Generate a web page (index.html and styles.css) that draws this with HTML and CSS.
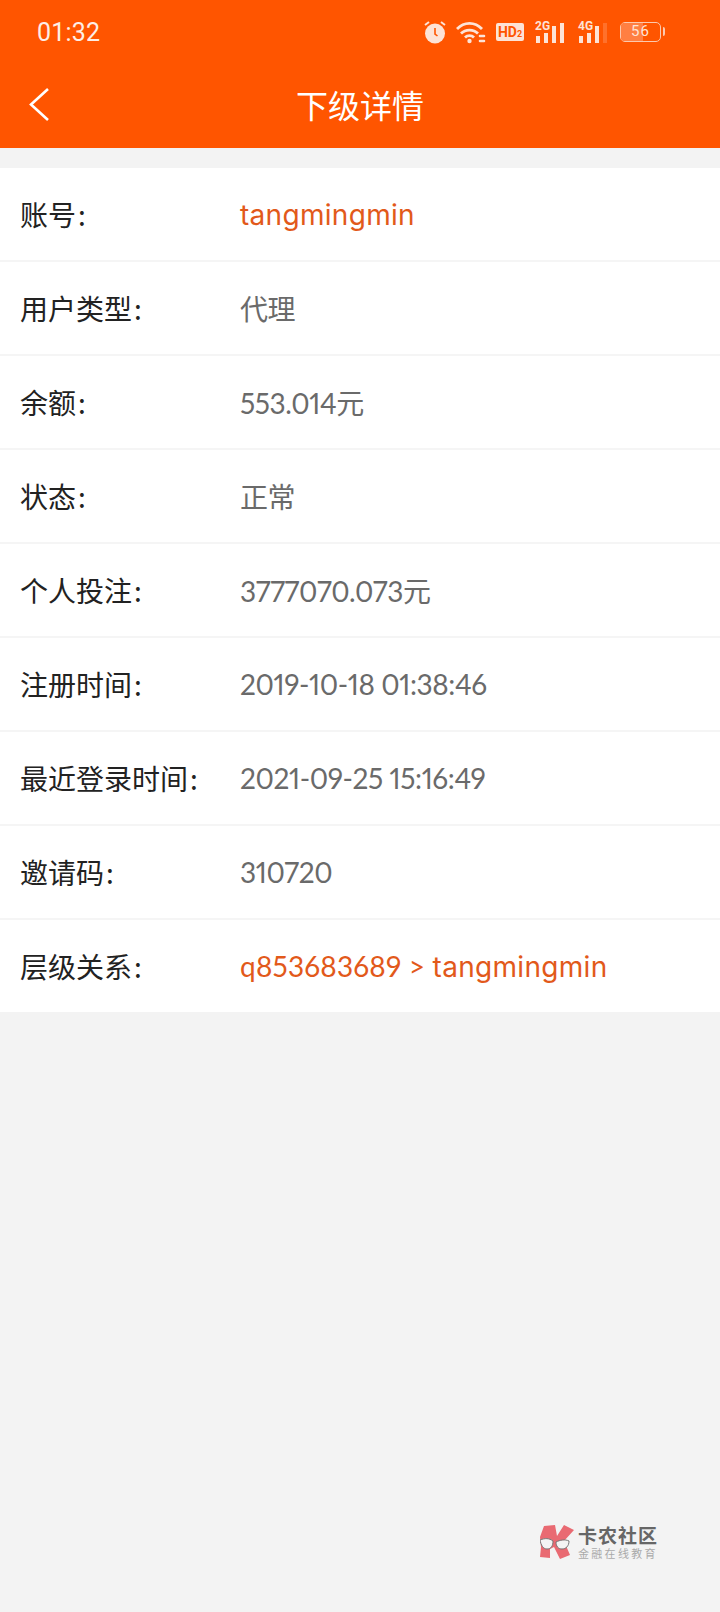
FILE: index.html
```html
<!DOCTYPE html>
<html lang="zh-CN">
<head>
  <meta charset="UTF-8">
  <meta name="viewport" content="width=device-width, initial-scale=1.0">
  <title>下级详情</title>
  <link rel="stylesheet" href="styles.css">
</head>
<body>
  <header class="top">
    <div class="status">
      <span class="time">01:32</span>
      <div class="status-icons">
        <!-- alarm -->
        <svg class="ic-alarm" width="24" height="24" viewBox="0 0 24 24">
          <circle cx="12" cy="13.5" r="10" fill="#fde3d6"/>
          <path d="M12 8v6l2.5 2" fill="none" stroke="#ff5500" stroke-width="1.6"/>
          <path d="M2 5l4-3M22 5l-4-3" fill="none" stroke="#fde3d6" stroke-width="2"/>
        </svg>
        <!-- wifi -->
        <svg class="ic-wifi" width="30" height="24" viewBox="0 0 30 24">
          <path d="M1 9C8 1.500 19 1.500 26 9M5 13.500c4.500-4.500 12.500-4.500 17 0M9 17.500c2.500-2.500 6.500-2.500 9 0" fill="none" stroke="#fde3d6" stroke-width="2.800"/>
          <circle cx="13.500" cy="21" r="2.200" fill="#fde3d6"/>
          <path d="M24 16l4 0M24 21l4 0" stroke="#fde3d6" stroke-width="2.600" stroke-linecap="round"/>
        </svg>
        <span class="hd">HD<small>2</small></span>
        <div class="signal">
          <span class="net">2G</span>
          <i class="b1"></i><i class="b2"></i><i class="b3"></i><i class="b4"></i>
        </div>
        <div class="signal">
          <span class="net">4G</span>
          <i class="b1"></i><i class="b2"></i><i class="b3"></i><i class="b4 dim"></i>
        </div>
        <div class="battery">
          <div class="level"></div>
          <span>56</span>
        </div>
      </div>
    </div>
    <div class="bar">
      <svg class="back" width="24" height="36" viewBox="0 0 24 36">
        <path d="M21 2L4 17.5 21 33" fill="none" stroke="#fff" stroke-width="2.6"/>
      </svg>
      <h1>下级详情</h1>
    </div>
  </header>

  <main class="list">
    <div class="row"><span class="label">账号<b>:</b></span><span class="value hot"><span class="name">tangmingmin</span></span></div>
    <div class="row"><span class="label">用户类型<b>:</b></span><span class="value">代理</span></div>
    <div class="row"><span class="label">余额<b>:</b></span><span class="value">553.014元</span></div>
    <div class="row"><span class="label">状态<b>:</b></span><span class="value">正常</span></div>
    <div class="row"><span class="label">个人投注<b>:</b></span><span class="value">3777070.073元</span></div>
    <div class="row"><span class="label">注册时间<b>:</b></span><span class="value">2019-10-18 01:38:46</span></div>
    <div class="row"><span class="label">最近登录时间<b>:</b></span><span class="value">2021-09-25 15:16:49</span></div>
    <div class="row"><span class="label">邀请码<b>:</b></span><span class="value">310720</span></div>
    <div class="row"><span class="label">层级关系<b>:</b></span><span class="value hot">q853683689 &gt; <span class="name">tangmingmin</span></span></div>
  </main>

  <div class="mark">
    <svg width="36" height="36" viewBox="0 0 36 36">
      <path d="M4 2l11-1 2 11 7-11 10 5-10 11 6 14-10 4-6-12-4 2 0 9-10-1 1-10-1-10z" fill="#e96a72"/>
      <path d="M0 16c5-2 9-2 13 1 0 5-2 8-6 8S1 21 0 16zM16 18c4-2 9-3 13-1 0 5-3 8-7 8s-6-3-6-7z" fill="#f4f4f4" stroke="#777" stroke-width="1"/>
    </svg>
    <div class="mark-text">
      <strong>卡农社区</strong>
      <span>金融在线教育</span>
    </div>
  </div>
</body>
</html>
```

FILE: styles.css
```css
body {
  font-family: "Lato", "Noto Sans CJK SC", sans-serif;
  margin: 0;
  padding: 0;
  width: 720px;
  height: 1612px;
  background-color: #f3f3f3;
  position: relative;
  overflow: hidden;
}
.top {
  background-color: #ff5500;
  color: white;
  height: 148px;
}
.status {
  display: flex;
  justify-content: space-between;
  align-items: center;
  height: 64px;
  padding: 0 59px 0 37px;
}
.time {
  font-family: "Roboto", sans-serif;
  font-size: 25px;
  color: #fdeee6;
  letter-spacing: 0.2px;
}
.status-icons {
  display: flex;
  align-items: center;
  gap: 10px;
}
.ic-alarm {
  margin-right: -1px;
}
.hd {
  background-color: #fde3d6;
  color: #ff5500;
  font-family: "Roboto", sans-serif;
  font-size: 14px;
  font-weight: bold;
  line-height: 18px;
  width: 28px;
  height: 18px;
  border-radius: 2px;
  text-align: center;
}
.hd small {
  font-size: 9px;
}
.signal {
  display: flex;
  align-items: flex-end;
  gap: 4px;
  width: 31px;
  height: 22px;
  position: relative;
  padding-left: 2px;
}
.signal i {
  display: block;
  width: 4px;
  background-color: #fde3d6;
}
.signal .b1 { height: 7px; }
.signal .b2 { height: 10px; }
.signal .b3 { height: 17px; }
.signal .b4 { height: 20px; }
.signal .dim { opacity: 0.2; }
.net {
  position: absolute;
  left: 1px;
  top: -2px;
  font-family: "Roboto", sans-serif;
  font-size: 12px;
  font-weight: bold;
  color: #fde3d6;
}
.battery {
  box-sizing: border-box;
  position: relative;
  width: 41px;
  height: 20px;
  border: 1.5px solid #fcc9ae;
  border-radius: 5px;
}
.battery::after {
  content: "";
  position: absolute;
  right: -5px;
  top: 4px;
  width: 2px;
  height: 9px;
  border-radius: 0 2px 2px 0;
  background-color: #fcc9ae;
}
.level {
  width: 56%;
  height: 100%;
  background-color: #ff7f42;
  border-radius: 3px 0 0 3px;
}
.battery span {
  position: absolute;
  left: 0;
  right: 0;
  top: 0;
  text-align: center;
  font-family: "Roboto", sans-serif;
  font-size: 15px;
  line-height: 17px;
  letter-spacing: 1px;
  color: #fde3d6;
}
.bar {
  display: flex;
  align-items: center;
  justify-content: center;
  height: 84px;
  position: relative;
}
.back {
  position: absolute;
  left: 27px;
  top: 23px;
}
.bar h1 {
  margin: 0;
  font-family: "Noto Sans CJK SC", sans-serif;
  font-size: 32px;
  font-weight: normal;
  line-height: 84px;
  position: relative;
  top: -2px;
}
.list {
  margin-top: 20px;
  background-color: white;
}
.row {
  display: flex;
  align-items: center;
  height: 92px;
  padding-left: 20px;
  border-bottom: 2px solid #f5f5f5;
  font-size: 28px;
}
.row:last-child {
  border-bottom: none;
}
.label {
  width: 220px;
  color: #222222;
  font-family: "Noto Sans CJK SC", sans-serif;
}
.label b {
  font-weight: normal;
  margin-left: 2px;
}
.value {
  color: #6a6a6a;
  font-variant-numeric: proportional-nums;
  letter-spacing: -0.4px;
}
.hot {
  color: #e2591a;
  letter-spacing: 0.2px;
}
.name {
  font-family: "Inter", sans-serif;
  letter-spacing: 0.3px;
}
.mark {
  position: absolute;
  left: 540px;
  top: 1524px;
  display: flex;
  align-items: center;
  gap: 2px;
}
.mark-text {
  display: flex;
  flex-direction: column;
  font-family: "Noto Sans CJK SC", sans-serif;
}
.mark-text strong {
  font-size: 19px;
  line-height: 22px;
  letter-spacing: 1px;
  color: #666666;
}
.mark-text span {
  font-size: 11px;
  line-height: 14px;
  letter-spacing: 2.3px;
  color: #aaaaaa;
}
```
